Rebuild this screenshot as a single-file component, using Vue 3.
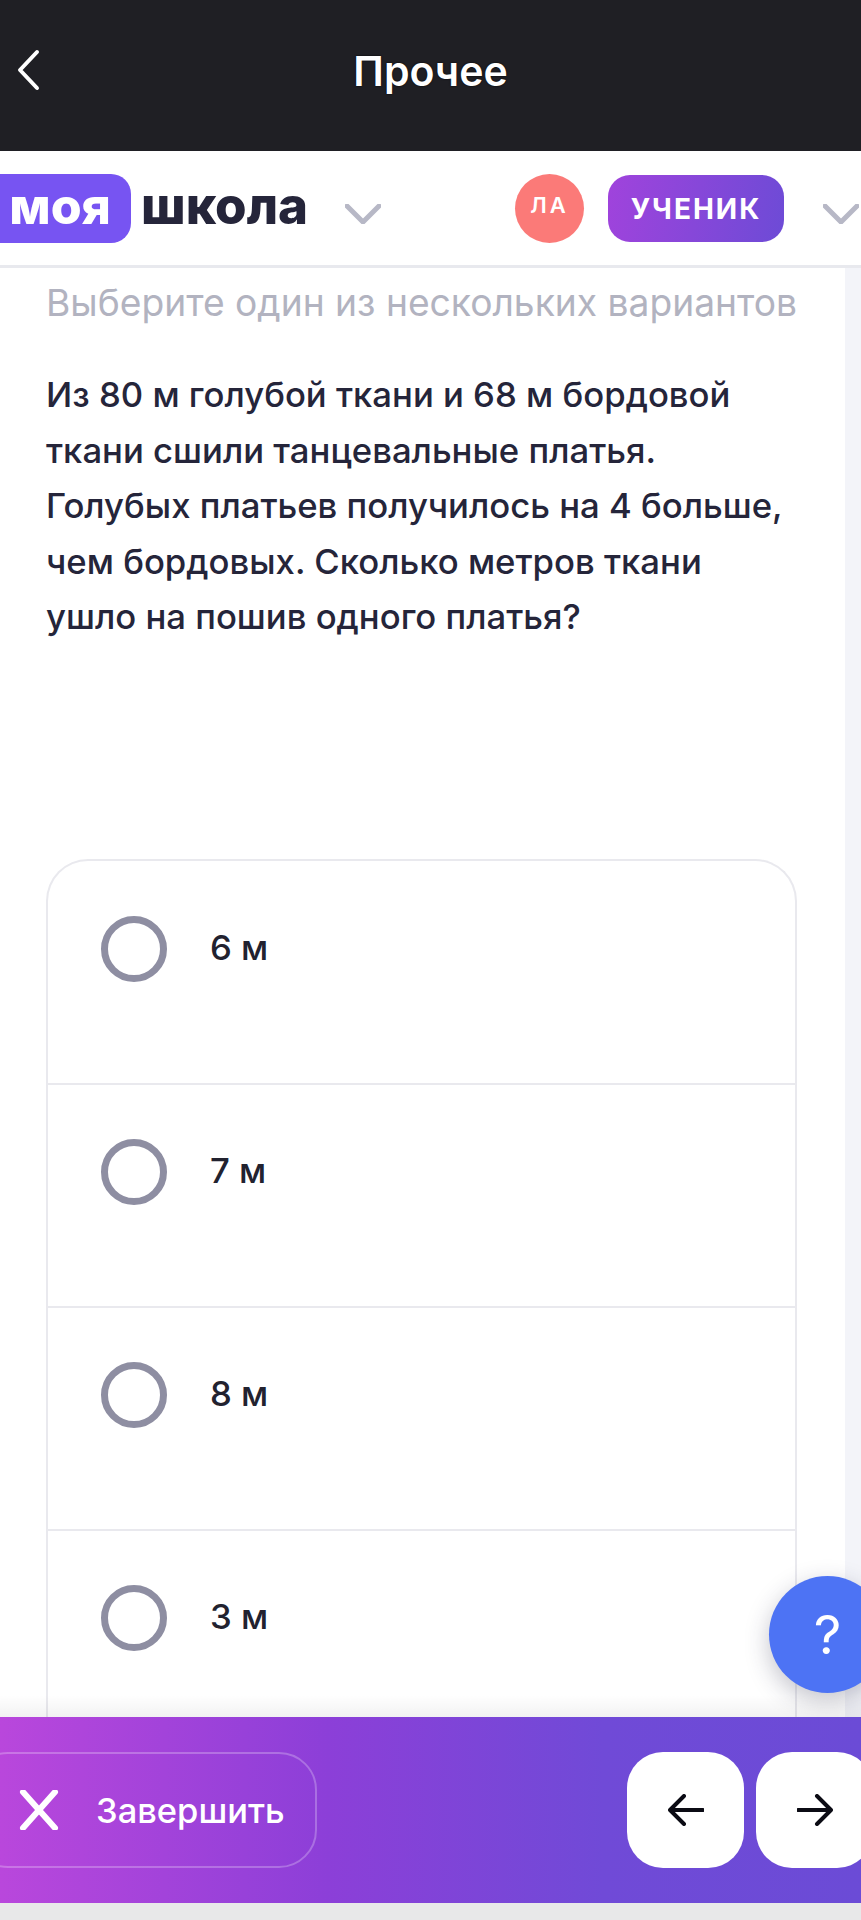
<template>
  <div class="screen">
    <header class="top-bar">
      <svg class="back" width="26" height="42" viewBox="0 0 26 42" fill="none">
        <path d="M22 3 L5 21 L22 39" stroke="#fff" stroke-width="4" stroke-linecap="round" stroke-linejoin="round" />
      </svg>
      <h1>Прочее</h1>
    </header>

    <nav class="site-nav">
      <div class="logo">
        <span class="logo-mark">моя</span>
        <span class="logo-word">школа</span>
        <svg class="chevron" width="36" height="20" viewBox="0 0 36 20" fill="none">
          <path d="M2 2 L18 18 L34 2" stroke="#b7b8c6" stroke-width="5" stroke-linecap="round" stroke-linejoin="round" />
        </svg>
      </div>
      <div class="user">
        <span class="avatar">ЛА</span>
        <span class="role">УЧЕНИК</span>
        <svg class="chevron" width="36" height="20" viewBox="0 0 36 20" fill="none">
          <path d="M2 2 L18 18 L34 2" stroke="#b7b8c6" stroke-width="5" stroke-linecap="round" stroke-linejoin="round" />
        </svg>
      </div>
    </nav>

    <main class="content">
      <section class="task">
        <p class="hint">Выберите один из нескольких вариантов</p>
        <p class="question">
          Из 80 м голубой ткани и 68 м бордовой<br>
          ткани сшили танцевальные платья.<br>
          Голубых платьев получилось на 4 больше,<br>
          чем бордовых. Сколько метров ткани<br>
          ушло на пошив одного платья?
        </p>
        <ul class="options">
          <li v-for="option in options" :key="option" class="option">
            <span class="radio"></span>
            <span class="option-label">{{ option }}</span>
          </li>
        </ul>
      </section>
      <button class="help" type="button">?</button>
    </main>

    <footer class="action-bar">
      <button class="finish" type="button">
        <svg width="40" height="40" viewBox="0 0 40 40" fill="none">
          <path d="M4 2 L36 38 M36 2 L4 38" stroke="#fff" stroke-width="6" stroke-linecap="round" />
        </svg>
        <span>Завершить</span>
      </button>
      <div class="pager">
        <button class="page-btn" type="button">
          <svg width="36" height="32" viewBox="0 0 36 32" fill="none">
            <path d="M16 2 L2 16 L16 30 M3 16 H35" stroke="#0b0b14" stroke-width="4" stroke-linecap="round" stroke-linejoin="round" />
          </svg>
        </button>
        <button class="page-btn" type="button">
          <svg width="36" height="32" viewBox="0 0 36 32" fill="none">
            <path d="M20 2 L34 16 L20 30 M33 16 H1" stroke="#0b0b14" stroke-width="4" stroke-linecap="round" stroke-linejoin="round" />
          </svg>
        </button>
      </div>
    </footer>
    <div class="bottom-gap"></div>
  </div>
</template>

<script setup>
const options = ['6 м', '7 м', '8 м', '3 м']
</script>

<style>
body {
  background: #fff;
}
</style>

<style scoped>
.screen {
  width: 861px;
  height: 1920px;
  display: flex;
  flex-direction: column;
  overflow: hidden;
  font-family: Inter, "Liberation Sans", sans-serif;
  color: #22222f;
}

.top-bar {
  height: 151px;
  flex: none;
  display: flex;
  align-items: center;
  justify-content: center;
  position: relative;
  background: #1f1f24;
}

.back {
  position: absolute;
  left: 15px;
  top: 49px;
}

h1 {
  margin: 0 0 10px;
  font-size: 41px;
  font-weight: 600;
  color: #fff;
  text-shadow: 0 0 2px #000;
}

.site-nav {
  height: 117px;
  flex: none;
  box-sizing: border-box;
  border-bottom: 3px solid #e8e9ee;
  display: flex;
  justify-content: space-between;
  padding-top: 23px;
  background: #fff;
}

.logo,
.user {
  display: flex;
  align-items: flex-start;
}

.logo-mark {
  width: 160px;
  height: 69px;
  margin-left: -29px;
  padding-right: 20px;
  box-sizing: border-box;
  display: flex;
  align-items: center;
  justify-content: flex-end;
  border-radius: 20px;
  background: #7754f2;
  color: #fff;
  font-size: 50px;
  font-weight: 800;
  line-height: 1;
  padding-bottom: 6px;
}

.logo-word {
  margin: 0 0 0 10px;
  height: 69px;
  display: flex;
  align-items: center;
  padding-bottom: 6px;
  box-sizing: border-box;
  font-size: 51px;
  font-weight: 800;
  line-height: 1;
  color: #25253a;
}

.logo .chevron {
  margin: 30px 0 0 37px;
}

.user {
  margin-right: 6px;
}

.avatar {
  width: 69px;
  height: 69px;
  border-radius: 50%;
  background: #fb7a78;
  color: #fff;
  font-size: 22px;
  font-weight: 600;
  letter-spacing: 3px;
  display: flex;
  align-items: center;
  justify-content: center;
  padding-bottom: 8px;
  box-sizing: border-box;
}

.role {
  width: 176px;
  height: 67px;
  margin: 1px 0 0 24px;
  border-radius: 22px;
  background: linear-gradient(100deg, #a043dc, #6d4bd6);
  color: #fff;
  font-size: 28px;
  font-weight: 700;
  letter-spacing: 2px;
  display: flex;
  align-items: center;
  justify-content: center;
}

.user .chevron {
  margin: 30px -4px 0 39px;
}

.content {
  flex: 1;
  min-height: 0;
  position: relative;
  overflow: hidden;
  background: #f3f4f9;
}

.content::after {
  content: "";
  position: absolute;
  left: 0;
  right: 0;
  bottom: 0;
  height: 22px;
  background: linear-gradient(180deg, rgba(0, 0, 0, 0), rgba(0, 0, 0, 0.05));
}

.task {
  width: 845px;
  height: 100%;
  box-sizing: border-box;
  padding: 14px 48px 0 46px;
  background: #fff;
}

.hint {
  margin: 0;
  font-size: 37.2px;
  line-height: 42px;
  color: #b2b3c0;
  white-space: nowrap;
}

.question {
  margin: 43px 0 0;
  font-size: 34.7px;
  line-height: 55.6px;
  font-weight: 450;
  color: #25253a;
  white-space: nowrap;
}

.options {
  list-style: none;
  margin: 214px 0 0;
  padding: 0;
  border: 2px solid #e9e9ee;
  border-bottom: 0;
  border-radius: 42px 42px 0 0;
}

.option {
  height: 223px;
  box-sizing: border-box;
  padding: 54px 0 0 53px;
  display: flex;
  align-items: flex-start;
  gap: 43px;
}

.option:first-child {
  height: 222px;
  padding-top: 55px;
}

.option + .option {
  border-top: 2px solid #e9e9ee;
}

.radio {
  width: 66px;
  height: 66px;
  flex: none;
  box-sizing: border-box;
  border: 7px solid #8e8ea2;
  border-radius: 50%;
}

.option-label {
  font-size: 34.7px;
  font-weight: 450;
  line-height: 62px;
}

.help {
  position: absolute;
  left: 769px;
  top: 1308px;
  width: 117px;
  height: 117px;
  border: 0;
  border-radius: 50%;
  background: #4d73f4;
  color: #fff;
  font-family: Inter, sans-serif;
  font-size: 54px;
  font-weight: 400;
  padding: 0;
  box-shadow: 0 8px 24px rgba(40, 40, 70, 0.28);
}

.action-bar {
  height: 186px;
  flex: none;
  box-sizing: border-box;
  padding-top: 35px;
  display: flex;
  justify-content: space-between;
  align-items: flex-start;
  background: linear-gradient(90deg, #b947dc, #8c3fd8 38%, #704ad7 70%, #6b4bd6);
}

.finish {
  width: 347px;
  height: 116px;
  margin-left: -30px;
  padding: 0 0 0 47px;
  box-sizing: border-box;
  display: flex;
  align-items: center;
  gap: 37px;
  border: 2px solid rgba(255, 255, 255, 0.25);
  border-radius: 38px;
  background: transparent;
  color: #fff;
  font-family: inherit;
  font-size: 34.5px;
  font-weight: 500;
}

.finish svg {
  flex: none;
}

.pager {
  display: flex;
  gap: 12px;
  margin-right: -12px;
}

.page-btn {
  width: 117px;
  height: 116px;
  padding: 0;
  border: 0;
  border-radius: 36px;
  background: #fff;
  display: flex;
  align-items: center;
  justify-content: center;
}

.bottom-gap {
  height: 17px;
  flex: none;
  background: #e8e8e9;
}
</style>
